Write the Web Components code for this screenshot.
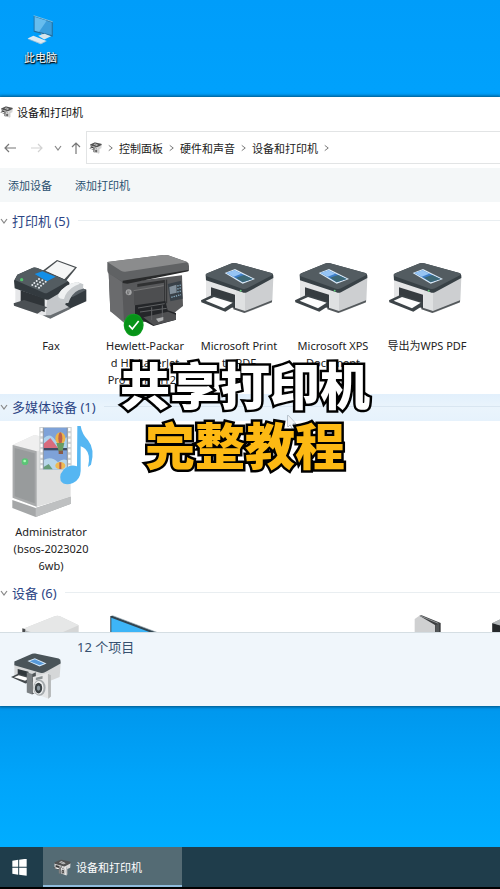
<!DOCTYPE html>
<html lang="zh-CN">
<head>
<meta charset="utf-8">
<meta name="viewport" content="width=device-width, initial-scale=1">
<title>设备和打印机</title>
<style>
  html, body { height: 100%; margin: 0; }
  body {
    font-family: 'Noto Sans', 'Noto Sans CJK SC', sans-serif;
    font-size: 12px;
    color: #222;
    overflow: hidden;
  }
</style>
</head>
<body>
<win-desktop>
  <desktop-shortcut slot="shortcuts">此电脑</desktop-shortcut>
  <explorer-window heading="设备和打印机">
    <nav-bar slot="bars" path="控制面板,硬件和声音,设备和打印机"></nav-bar>
    <command-bar slot="bars" commands="添加设备,添加打印机"></command-bar>
    <device-group label="打印机 (5)">
      <device-item icon="fax">Fax</device-item>
      <device-item icon="laser">Hewlett-Packar<br>d HP LaserJet<br>Pro MFP M126</device-item>
      <device-item icon="printer">Microsoft Print<br>to PDF</device-item>
      <device-item icon="printer">Microsoft XPS<br>Document</device-item>
      <device-item icon="printer">导出为WPS PDF</device-item>
    </device-group>
    <device-group label="多媒体设备 (1)" active>
      <device-item icon="media">Administrator<br>(bsos-2023020<br>6wb)</device-item>
    </device-group>
    <device-group label="设备 (6)">
      <device-item icon="tower"></device-item>
      <device-item icon="monitor"></device-item>
      <device-item></device-item>
      <device-item></device-item>
      <device-item icon="drive"></device-item>
      <device-item icon="box"></device-item>
    </device-group>
    <details-pane slot="details">12 个项目</details-pane>
  </explorer-window>
  <task-bar slot="taskbar">设备和打印机</task-bar>
  <video-caption slot="overlay">共享打印机<span slot="second">完整教程</span></video-caption>
</win-desktop>

<script>
(function() {
  // Icon art, each entry is [viewBox, markup]
  const ICONS = {
    printer: ['6 0 282 291', `
      <path d="M48 118L165 156V216L130 205L48 180Z" fill="#e4e5e6"/>
      <path d="M165 156L250 112L247 183Q246 187 240 190L172 217Q165 219 158 215L140 208V150Z" fill="#cdcfd1"/>
      <path d="M138 150L165 158V216L138 208Z" fill="#dfe1e2"/>
      <path d="M130 208L163 219L246 187V181L165 213L130 202Z" fill="#54595c"/>
      <path d="M63 142L135 164V205L63 182Z" fill="#363c40"/>
      <path d="M33 181L68 164L134 186L134 197L106 215L34 187Z" fill="#3d4448"/>
      <path d="M47 182L72 171L128 188L102 205Z" fill="#fdfdfd"/>
      <path d="M47 106Q46 103 52 100L122 71Q130 67 138 70L244 99Q250 101 250 107V114L171 157Q164 160 157 157L48 121Z" fill="#384146"/>
      <path d="M47 105Q47 102 52 100L122 71Q130 67 138 70L244 99Q251 102 246 106L171 145Q164 149 156 146L50 109Z" fill="#535c61"/>
      <path d="M104 99L135 87L195 117L158 131Z" fill="#dcebf7"/>
      <path d="M110 99L134 91L188 117L158 127Z" fill="#3f7fc9"/>
      <path d="M110 99L134 91L154 101L131 110Z" fill="#96c4f4"/>
      <path d="M138 113L162 105L188 117L158 127Z" fill="#3d6977"/>
      <circle cx="152" cy="152" r="3" fill="#62c97b"/>`],

    devices: ['30 228 155 142', `
      <path d="M43 262L128 287L181 262L178 302L128 322L43 298Z" fill="#d5d7d8"/>
      <path d="M53 278L85 286V306L53 298Z" fill="#30373b"/>
      <path d="M33 302L54 292L98 304V316L76 321Z" fill="#43494c"/>
      <path d="M42 303L56 297L88 306L75 313Z" fill="#fff"/>
      <path d="M43 256L96 233Q100 231 105 232L175 247Q182 249 181 257V262L134 288Q128 291 120 289L43 267Z" fill="#4a5459"/>
      <path d="M82 254L104 246L139 262L118 271Z" fill="#d9ebfa"/>
      <path d="M88 255L104 249L132 262L118 267Z" fill="#5799d9"/>
      <path d="M80 288L96 293V354L80 348Z" fill="#7b8083"/>
      <path d="M96 293L107 288V348L96 354Z" fill="#4e5356"/>
      <path d="M98 302L143 290L152 296V359L145 367L98 349Z" fill="#e6e7e8"/>
      <path d="M143 292L152 296V360L144 367Z" fill="#b6b9ba"/>
      <ellipse cx="118" cy="334" rx="18" ry="24" fill="#a6abae"/>
      <ellipse cx="116" cy="334" rx="14" ry="20" fill="#f1f2f3"/>
      <ellipse cx="115" cy="335" rx="11" ry="16" fill="#3b4246"/>
      <ellipse cx="115" cy="335" rx="5" ry="8" fill="#8c98a0"/>
      <path d="M107 304L127 299V307L107 312Z" fill="#8b9193"/>`],

    fax: ['12 0 282 291', `
      <path d="M46 142L142 174L210 136V206L151 235L46 198Z" fill="#e6e7e9"/>
      <path d="M142 174L210 136V206L151 235L137 230Z" fill="#c4c7ca"/>
      <path d="M128 226L151 236L212 206V199L151 226Z" fill="#686d71"/>
      <path d="M62 151L134 175V216L62 190Z" fill="#2f3438"/>
      <path d="M41 190L72 180L142 202L112 221L42 197Z" fill="#4b5054"/>
      <path d="M128 92L171 60L231 82L196 125Z" fill="#484d50"/>
      <path d="M136 92L172 64L225 83L193 118Z" fill="#f5f6f6"/>
      <path d="M42 122L52 104L99 83Q105 81 112 84L202 122Q210 126 209 134V142L148 178Q142 181 135 178L44 145Z" fill="#333a3f"/>
      <path d="M45 120L52 104L99 83Q105 81 112 84L204 124L143 158Q138 161 131 158Z" fill="#535c61"/>
      <path d="M104 102L127 94L167 110L141 124Z" fill="#138fe8"/>
      <g fill="#e5eaee">
        <circle cx="117" cy="117" r="3"/><circle cx="127" cy="121" r="3"/><circle cx="137" cy="125" r="3"/>
        <circle cx="110" cy="123" r="3"/><circle cx="120" cy="127" r="3"/><circle cx="130" cy="131" r="3"/>
        <circle cx="103" cy="129" r="3"/><circle cx="113" cy="133" r="3"/><circle cx="123" cy="137" r="3"/>
        <circle cx="97" cy="135" r="3"/><circle cx="107" cy="139" r="3"/><circle cx="117" cy="143" r="3"/>
      </g>
      <circle cx="65" cy="119" r="5" fill="#54c26e"/>
      <path d="M203 162L242 143L259 149V184L212 205L196 194Z" fill="#343b40"/>
      <path d="M203 162L242 143L259 149L218 171Z" fill="#596167"/>
      <path d="M175 163Q194 132 232 126L250 133L249 146Q222 151 210 177L205 189L188 190L174 182Z" fill="#c5c9cc"/>
      <path d="M175 163Q194 132 232 126L240 131Q209 141 196 166L192 177Q180 178 175 171Z" fill="#eff1f2"/>`],

    laser: ['294 0 282 291', `
      <path d="M326 98L382 126L546 106L549 198L527 215L500 240L384 250L331 214Z" fill="#58595b"/>
      <path d="M326 98L366 126L372 248L331 214Z" fill="#6a6b6d"/>
      <path d="M322 66L490 45Q497 44 504 46L560 65Q567 68 567 78V92L384 126Q374 128 366 124L327 101Q322 98 322 91Z" fill="#606264"/>
      <path d="M322 66L490 45Q497 44 504 46L562 67L376 95Q370 96 364 93Z" fill="#8b8c8d"/>
      <path d="M368 122L565 90V94L382 131L368 129Z" fill="#292a2b"/>
      <path d="M412 132L492 120V128L412 141Z" fill="#303132"/>
      <path d="M402 151L491 137V186L402 196Z" fill="#4d4e50"/>
      <path d="M401 152L491 137" stroke="#888" stroke-width="2"/>
      <path d="M494 120V191M500 119V190" stroke="#2e2f31" stroke-width="3"/>
      <path d="M503 132L543 122L548 176L511 184Z" fill="#394148"/>
      <path d="M508 141L529 134L530 158L510 163Z" fill="#83909b"/>
      <path d="M532 138L543 135M532 147L544 143M532 156L545 153M514 172L543 164" stroke="#88acc0" stroke-width="4" stroke-dasharray="4 3"/>
      <path d="M405 196L496 183L503 211L528 219V239L460 258L405 229Z" fill="#242629"/>
      <path d="M430 232L504 215L528 224V239L461 256Z" fill="#4f5052"/>
      <path d="M414 204L494 191M420 216L500 205M455 202V240M487 196V232" stroke="#606264" stroke-width="3"/>
      <path d="M468 236L490 231V241L475 246Z" fill="#b0b2b3"/>
      <circle cx="386" cy="157" r="9" fill="#a5a6a7"/>
      <path d="M384 151L381 164M388 152L385 163" stroke="#595a5c" stroke-width="2"/>
      <ellipse cx="401" cy="255" rx="30" ry="34" fill="#109f22"/>
      <ellipse cx="401" cy="255" rx="27" ry="31" fill="#079318"/>
      <path d="M387 256L397 267L416 243" fill="none" stroke="#fff" stroke-width="5"/>`],

    media: ['12 108 282 291', `
      <path d="M38 165L103 135L212 160V322L110 350L38 323Z" fill="#dfe0e0"/>
      <path d="M38 165L103 135L212 160L110 184Z" fill="#efefef"/>
      <path d="M38 165L110 184V350L38 323Z" fill="#a8aaab"/>
      <path d="M44 174L104 190V340L44 319Z" fill="#989b9c"/>
      <path d="M37 330L107 354L213 320V341L107 381L37 354Z" fill="#a5a7a8"/>
      <path d="M107 354L213 320V341L107 381Z" fill="#bec0c1"/>
      <circle cx="75" cy="215" r="10" fill="#5cc477"/>
      <circle cx="74" cy="213" r="4" fill="#a9ffb5"/>
      <path d="M118 111H215V240H118Z" fill="#cfd2d3"/>
      <path d="M131 113H201V238H131Z" fill="#7ea2d8"/>
      <path d="M131 145Q150 125 166 151Q182 151 201 142V174H131Z" fill="#add2ed"/>
      <path d="M131 161L151 144L174 174H131Z" fill="#d86b7c"/>
      <path d="M131 174H201V181H131Z" fill="#404b64"/>
      <path d="M131 210Q154 197 174 217Q188 204 201 211V238H131Z" fill="#b7d6ea"/>
      <ellipse cx="181" cy="145" rx="15" ry="18" fill="#ecb44a"/>
      <ellipse cx="181" cy="145" rx="6" ry="18" fill="#bd604d"/>
      <path d="M169 159L177 187H187L193 159" fill="#6a9b61"/>
      <path d="M176 182H189V192H176Z" fill="#895a46"/>
      <ellipse cx="181" cy="227" rx="15" ry="11" fill="#efba52"/>
      <path d="M178 217H184V237H178Z" fill="#b85a4d"/>
      <path d="M131 231L146 222L158 238H131Z" fill="#669c79"/>
      <path d="M125 114V240M208 114V240" stroke="#fff" stroke-width="7" stroke-dasharray="9 7"/>
      <path d="M130 113V238M202 113V238" stroke="#737e89" stroke-width="2"/>
      <path d="M232 108H242Q246 132 264 151Q286 178 273 224L264 231Q273 193 256 177Q249 171 242 169V243Q241 269 219 279Q193 289 182 272Q176 248 198 233Q215 222 231 229Z" fill="#55b6f2"/>`],

    tower: ['12 111 282 291', `
      <path d="M68 162L164 124Q172 121 180 124L236 151V330H68Z" fill="#d5d6d6"/>
      <path d="M68 162L164 124Q172 121 180 124L236 151L145 190Z" fill="#e6e7e7"/>
      <path d="M67 160L76 163V330H67Z" fill="#4a4c4e"/>
      <path d="M75 167L145 188V330H75Z" fill="#a9acae"/>`],

    monitor: ['294 111 282 291', `
      <path d="M331 123L338 122L550 202V320L331 290Z" fill="#32444f"/>
      <path d="M334 128L546 208V311L334 284Z" fill="#3db5f7"/>
      <path d="M338 122L550 202" stroke="#9aabb3" stroke-width="2"/>`],

    drive: ['390 111 282 291', `
      <path d="M494 132L508 122L555 147V330H494Z" fill="#cfd0d1"/>
      <path d="M508 122L515 121L572 144V330H555V150Z" fill="#3c3e40"/>
      <path d="M512 123L565 145" stroke="#929597" stroke-width="3"/>
      <path d="M556 150L567 146V330H556Z" fill="#535658"/>`],

    box: ['672 111 282 291', `
      <path d="M727 145L760 129L900 160V330H727Z" fill="#6e7477"/>
      <path d="M727 145L860 181V330H727Z" fill="#25282a"/>
      <path d="M727 144L760 129L780 134L748 151Z" fill="#b5b9bb"/>`],

    computer: ['88 48 78 88', `
      <path d="M107 50L163 68V112L107 97Z" fill="#246f9f"/>
      <path d="M110 54L160 70V107L110 94Z" fill="#3a9edd"/>
      <path d="M110 54L145 65L123 97L110 94Z" fill="#67bdee"/>
      <path d="M107 50L163 68" stroke="#a7d7ee" stroke-width="2"/>
      <path d="M128 102L143 106V112L133 111Z" fill="#a6b9c4"/>
      <path d="M120 109L139 103L158 110L138 120Z" fill="#d5e4eb"/>
      <path d="M89 117L106 109L145 124L128 134Z" fill="#dceaf3"/>
      <path d="M91 119L128 132L144 125" fill="none" stroke="#86b3ce" stroke-width="2"/>`],

    back: ['0 0 12 10', '<path d="M12 5H1M5 1L1 5L5 9" fill="none" stroke="#777" stroke-width="1.2"/>'],
    forward: ['0 0 12 10', '<path d="M0 5H11M7 1L11 5L7 9" fill="none" stroke="#d2d2d2" stroke-width="1.2"/>'],
    up: ['0 0 10 12', '<path d="M5 12V1M1 5L5 1L9 5" fill="none" stroke="#777" stroke-width="1.2"/>'],
    down: ['0 0 8 8', '<path d="M1 2L4 6L7 2" fill="none" stroke="#888" stroke-width="1.2"/>'],
    right: ['0 0 8 8', '<path d="M2 1L6 4L2 7" fill="none" stroke="#777" stroke-width="1.1"/>'],
    windows: ['36 70 46 52', '<path d="M37 75L55 72V94H37ZM58 72L81 69V94H58ZM37 97H55V118L37 115ZM58 97H81V121L58 118Z" fill="#fff"/>'],
    cursor: ['560 193 30 44', '<path d="M563 197V231L570 224L576 237L583 233L577 221H586Z" fill="#eef3f9" stroke="#59636f" stroke-width="2"/>']
  };

  class GlyphIcon extends HTMLElement {
    constructor() {
      super();
      this.attachShadow({ mode: 'open' });
    }

    connectedCallback() {
      const icon = ICONS[this.getAttribute('name')];
      this.shadowRoot.innerHTML = `
        <style>
          :host { display: block; flex: none; }
          svg { display: block; width: 100%; height: 100%; }
        </style>
        ${icon ? `<svg viewBox="${icon[0]}" aria-hidden="true">${icon[1]}</svg>` : ''}
      `;
    }
  }

  class WinDesktop extends HTMLElement {
    constructor() {
      super();
      this.attachShadow({ mode: 'open' });
      this.shadowRoot.innerHTML = `
        <style>
          :host {
            display: flex;
            flex-direction: column;
            position: relative;
            height: 100vh;
            overflow: hidden;
            background: linear-gradient(#009dfa 0%, #00a1fc 10%, #0098ee 80%, #00a5fb 88%, #00adff 95%);
          }
          .shortcuts { padding: 15px 20px; min-height: 67px; }
          main {
            flex: 1;
            min-height: 0;
            display: flex;
            flex-direction: column;
            padding-bottom: 141px;
          }
        </style>
        <div class="shortcuts"><slot name="shortcuts"></slot></div>
        <main><slot></slot></main>
        <slot name="taskbar"></slot>
        <slot name="overlay"></slot>
      `;
    }
  }

  class DesktopShortcut extends HTMLElement {
    constructor() {
      super();
      this.attachShadow({ mode: 'open' });
      this.shadowRoot.innerHTML = `
        <style>
          :host { display: inline-block; }
          button {
            display: flex;
            flex-direction: column;
            align-items: center;
            gap: 4px;
            border: none;
            padding: 0 4px;
            background: none;
            color: #fff;
            font: inherit;
            font-size: 11px;
            line-height: 18px;
            text-shadow: 0 1px 2px #000, 1px 1px 1px #000;
          }
          glyph-icon { width: 27px; height: 30px; }
        </style>
        <button type="button"><glyph-icon name="computer"></glyph-icon><slot></slot></button>
      `;
    }
  }

  class ExplorerWindow extends HTMLElement {
    constructor() {
      super();
      this.attachShadow({ mode: 'open' });
      this.shadowRoot.innerHTML = `
        <style>
          :host {
            flex: 1;
            min-height: 0;
            display: flex;
            flex-direction: column;
            background: #fff;
            box-shadow: 0 0 3px 1px #00507c;
          }
          header {
            display: flex;
            align-items: center;
            gap: 4px;
            height: 30px;
            padding-bottom: 4px;
            color: #111;
          }
          h1 { margin: 0; font-size: 11px; font-weight: normal; }
          header glyph-icon { width: 13px; height: 12px; filter: grayscale(1); }
          .list { flex: 1; min-height: 0; overflow: hidden; padding-top: 6px; }
        </style>
        <header><glyph-icon name="devices"></glyph-icon><h1>${this.getAttribute('heading')}</h1></header>
        <slot name="bars"></slot>
        <div class="list"><slot></slot></div>
        <slot name="details"></slot>
      `;
    }
  }

  class NavBar extends HTMLElement {
    constructor() {
      super();
      this.attachShadow({ mode: 'open' });
      const crumbs = this.getAttribute('path').split(',').map(name =>
        `<a href="#">${name}</a><glyph-icon name="right"></glyph-icon>`).join('');
      this.shadowRoot.innerHTML = `
        <style>
          :host {
            display: flex;
            align-items: center;
            padding-left: 4px;
            margin-bottom: 4px;
            font-size: 11px;
          }
          button { border: none; padding: 0; background: none; display: block; }
          .back, .forward { width: 12px; margin-right: 15px; }
          .back glyph-icon, .forward glyph-icon { height: 10px; }
          .forward { margin-right: 11px; }
          .recent { width: 8px; margin-right: 9px; }
          .recent glyph-icon { height: 8px; }
          .up { width: 10px; margin-right: 5px; }
          .up glyph-icon { height: 12px; }
          nav {
            flex: 1;
            display: flex;
            align-items: center;
            gap: 5px;
            height: 31px;
            padding-left: 2px;
            border: 1px solid #e2e4e5;
            border-right: none;
          }
          nav glyph-icon { width: 7px; height: 8px; }
          nav glyph-icon.place { width: 13px; height: 12px; filter: grayscale(1); }
          a { color: #222; text-decoration: none; white-space: nowrap; }
        </style>
        <button class="back" type="button" aria-label="后退"><glyph-icon name="back"></glyph-icon></button>
        <button class="forward" type="button" aria-label="前进"><glyph-icon name="forward"></glyph-icon></button>
        <button class="recent" type="button" aria-label="最近"><glyph-icon name="down"></glyph-icon></button>
        <button class="up" type="button" aria-label="向上"><glyph-icon name="up"></glyph-icon></button>
        <nav><glyph-icon class="place" name="devices"></glyph-icon><glyph-icon name="right"></glyph-icon>${crumbs}</nav>
      `;
    }
  }

  class CommandBar extends HTMLElement {
    constructor() {
      super();
      this.attachShadow({ mode: 'open' });
      const buttons = this.getAttribute('commands').split(',').map(name =>
        `<button type="button">${name}</button>`).join('');
      this.shadowRoot.innerHTML = `
        <style>
          :host {
            display: flex;
            align-items: center;
            gap: 23px;
            height: 34px;
            padding-left: 8px;
            background: #f4f7f8;
          }
          button {
            border: none;
            padding: 0;
            background: none;
            color: #29506f;
            font: inherit;
            font-size: 11px;
          }
        </style>
        ${buttons}
      `;
    }
  }

  class DeviceGroup extends HTMLElement {
    constructor() {
      super();
      this.attachShadow({ mode: 'open' });
      this.shadowRoot.innerHTML = `
        <style>
          :host { display: block; }
          h2 {
            display: flex;
            align-items: center;
            gap: 8px;
            height: 25px;
            padding-bottom: 2px;
            margin: 0;
            font-weight: normal;
          }
          h2::after { content: ''; flex: 1; height: 1px; background: #e9eef1; }
          :host([active]) h2 { background: linear-gradient(#e2f0fc, #eaf4fc 50%, #e6f2fc); }
          :host([active]) h2::after { background: #d9e6f1; }
          button {
            display: flex;
            align-items: center;
            gap: 4px;
            border: none;
            padding: 0;
            background: none;
            color: #2c4585;
            font: inherit;
            font-size: 13px;
          }
          button glyph-icon { width: 8px; height: 8px; }
          .items { display: flex; padding: 5px 0 6px 4px; }
        </style>
        <h2><button type="button"><glyph-icon name="down"></glyph-icon>${this.getAttribute('label')}</button></h2>
        <div class="items"><slot></slot></div>
      `;
    }
  }

  class DeviceItem extends HTMLElement {
    constructor() {
      super();
      this.attachShadow({ mode: 'open' });
      this.shadowRoot.innerHTML = `
        <style>
          :host {
            display: block;
            flex: none;
            width: 94px;
            text-align: center;
            line-height: 17px;
            white-space: nowrap;
          }
          glyph-icon { width: 94px; height: 97px; }
          .label { min-height: 51px; font-size: 11px; }
        </style>
        <glyph-icon name="${this.getAttribute('icon') || ''}"></glyph-icon>
        <div class="label"><slot></slot></div>
      `;
    }
  }

  class DetailsPane extends HTMLElement {
    constructor() {
      super();
      this.attachShadow({ mode: 'open' });
      this.shadowRoot.innerHTML = `
        <style>
          :host {
            display: flex;
            gap: 15px;
            padding: 4px 10px 6px;
            border-top: 1px solid #d5dee3;
            background: #f0f6fb;
            color: #36506f;
            font-size: 13px;
            line-height: 20px;
          }
          glyph-icon { width: 52px; height: 48px; margin-top: 15px; }
        </style>
        <glyph-icon name="devices"></glyph-icon>
        <div><slot></slot></div>
      `;
    }
  }

  class TaskBar extends HTMLElement {
    constructor() {
      super();
      this.attachShadow({ mode: 'open' });
      this.shadowRoot.innerHTML = `
        <style>
          :host {
            display: flex;
            height: 40px;
            border-bottom: 2px solid #000;
            background: #1f3d4b;
          }
          button {
            display: flex;
            align-items: center;
            border: none;
            background: none;
            color: #fff;
            font: inherit;
            font-size: 11px;
          }
          .start { width: 43px; padding: 0 0 0 12px; }
          .start glyph-icon { width: 15px; height: 17px; }
          .task {
            gap: 5px;
            width: 139px;
            padding: 2px 10px 0;
            border-bottom: 2px solid #8fbcdd;
            background: #546b74;
          }
          .task glyph-icon { width: 18px; height: 17px; filter: grayscale(1); }
        </style>
        <button class="start" type="button" aria-label="开始"><glyph-icon name="windows"></glyph-icon></button>
        <button class="task" type="button"><glyph-icon name="devices"></glyph-icon><slot></slot></button>
      `;
    }
  }

  // Big outlined caption plus the mouse pointer, both float over the window
  class VideoCaption extends HTMLElement {
    constructor() {
      super();
      this.attachShadow({ mode: 'open' });
      this.shadowRoot.innerHTML = `
        <style>
          :host {
            position: absolute;
            top: 353px;
            left: 0;
            right: 10px;
            pointer-events: none;
            text-align: center;
            font-family: 'Noto Sans CJK SC', sans-serif;
            font-size: 50px;
            font-weight: 900;
            line-height: 60px;
            color: #fff;
            -webkit-text-stroke: 5px #000;
            paint-order: stroke fill;
          }
          div { position: relative; }
          .second { color: #fdb913; }
          glyph-icon {
            position: absolute;
            top: 61px;
            left: 287px;
            width: 10px;
            height: 15px;
          }
        </style>
        <glyph-icon name="cursor"></glyph-icon>
        <div><slot></slot></div>
        <div class="second"><slot name="second"></slot></div>
      `;
    }
  }

  customElements.define('glyph-icon', GlyphIcon);
  customElements.define('win-desktop', WinDesktop);
  customElements.define('desktop-shortcut', DesktopShortcut);
  customElements.define('explorer-window', ExplorerWindow);
  customElements.define('nav-bar', NavBar);
  customElements.define('command-bar', CommandBar);
  customElements.define('device-group', DeviceGroup);
  customElements.define('device-item', DeviceItem);
  customElements.define('details-pane', DetailsPane);
  customElements.define('task-bar', TaskBar);
  customElements.define('video-caption', VideoCaption);
})();
</script>
</body>
</html>
